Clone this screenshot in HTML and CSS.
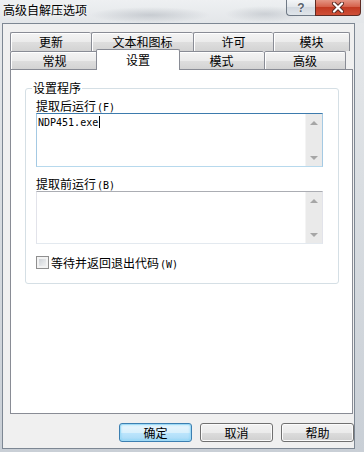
FILE: index.html
```html
<!DOCTYPE html>
<html>
<head>
    <title>高级自解压选项</title>
    <link rel="stylesheet" href="styles.css">
</head>
<body>
    <div class="window">
        <div class="titlebar">
            <span class="title">高级自解压选项</span>
            <div class="caption-buttons">
                <div class="cap-btn cap-help">?</div>
                <div class="cap-btn cap-close">
                    <svg width="14" height="11" viewBox="0 0 14 11">
                        <path d="M3 1.5 L11 9.5 M11 1.5 L3 9.5" stroke="#5a2a22" stroke-width="4" stroke-linecap="round"/>
                        <path d="M3 1.5 L11 9.5 M11 1.5 L3 9.5" stroke="#fff" stroke-width="2.2" stroke-linecap="round"/>
                    </svg>
                </div>
            </div>
        </div>

        <div class="client">
            <div class="tabs">
                <div class="tab-row back">
                    <div class="tab tab-update">更新</div>
                    <div class="tab tab-text">文本和图标</div>
                    <div class="tab tab-license">许可</div>
                    <div class="tab tab-modules">模块</div>
                </div>
                <div class="tab-row front">
                    <div class="tab tab-general">常规</div>
                    <div class="tab tab-setup active">设置</div>
                    <div class="tab tab-modes">模式</div>
                    <div class="tab tab-advanced">高级</div>
                </div>
            </div>

            <div class="panel">
                <fieldset class="group">
                    <legend>设置程序</legend>

                    <div class="field-label">提取后运行<span class="key">(F)</span></div>
                    <div class="textbox focused">
                        <div class="textbox-text">NDP451.exe<span class="caret"></span></div>
                        <div class="scrollbar">
                            <div class="scroll-btn"><span class="arrow-up"></span></div>
                            <div class="scroll-btn"><span class="arrow-down"></span></div>
                        </div>
                    </div>

                    <div class="field-label second">提取前运行<span class="key">(B)</span></div>
                    <div class="textbox short">
                        <div class="textbox-text"></div>
                        <div class="scrollbar">
                            <div class="scroll-btn"><span class="arrow-up"></span></div>
                            <div class="scroll-btn"><span class="arrow-down"></span></div>
                        </div>
                    </div>

                    <label class="check-row">
                        <span class="checkbox"></span>
                        <span>等待并返回退出代码<span class="key">(W)</span></span>
                    </label>
                </fieldset>
            </div>

            <div class="buttons">
                <button class="btn default">确定</button>
                <button class="btn">取消</button>
                <button class="btn">帮助</button>
            </div>
        </div>
    </div>
</body>
</html>
```

FILE: styles.css
```css
* {
    box-sizing: border-box;
}

body {
    margin: 0;
    font-family: "Noto Sans CJK SC", "Noto Sans", sans-serif;
    font-size: 12px;
    color: #000;
    background: #d7dce1;
}

.window {
    width: 364px;
    height: 452px;
    display: flex;
    flex-direction: column;
    overflow: hidden;
    background: linear-gradient(180deg, #e8eaec 0%, #dadee2 40%, #c9cfd6 100%);
}

/* title bar */

.titlebar {
    height: 23px;
    display: flex;
    align-items: flex-start;
    padding-left: 3px;
    background:
        radial-gradient(ellipse 60px 8px at 150px 15px, rgba(140, 148, 158, 0.35), transparent),
        radial-gradient(ellipse 40px 8px at 265px 14px, rgba(140, 148, 158, 0.3), transparent),
        linear-gradient(#eef0f2, #e3e6e9);
}

.title {
    line-height: 20px;
    text-shadow: 0 0 5px #fff;
}

.caption-buttons {
    display: flex;
    margin-left: auto;
    margin-right: 3px;
}

.cap-btn {
    height: 16px;
    display: flex;
    align-items: center;
    justify-content: center;
    border: 1px solid #6f7985;
    border-top: none;
}

.cap-help {
    width: 29px;
    border-right: none;
    border-radius: 0 0 0 4px;
    background: linear-gradient(#f4f6f8 0%, #e3e7eb 45%, #d3d9e0 50%, #e0e5ea 100%);
    font: bold 12px "Liberation Sans", sans-serif;
    color: #5a626c;
    text-shadow: 0 0 2px #fff;
}

.cap-close {
    width: 46px;
    border-color: #5e2b23;
    border-radius: 0 0 4px 0;
    background: linear-gradient(#e49584 0%, #d5624c 45%, #c23a22 50%, #cf4f37 100%);
}

/* client area */

.client {
    flex: 1;
    margin: 0 9px 3px 2px;
    border: 1px solid #7d8793;
    background: #f0f0f0;
    display: flex;
    flex-direction: column;
    padding: 8px 0 6px 7px;
}

/* tabs */

.tabs {
    display: flex;
    flex-direction: column;
}

.tab-row {
    display: flex;
    align-items: flex-start;
}

.tab-row.back {
    height: 19px;
}

.tab-row.front {
    height: 18px;
}

.tab {
    display: flex;
    align-items: center;
    justify-content: center;
    border: 1px solid #898c95;
    border-bottom: none;
    border-right: none;
    border-radius: 2px 2px 0 0;
    background: linear-gradient(#f4f4f4 0%, #ebebeb 50%, #dedede 52%, #d3d3d3 100%);
    box-shadow: inset 1px 1px 0 #fff;
    line-height: 14px;
}

.tab:last-child {
    border-right: 1px solid #898c95;
}

.tab-row.back .tab {
    height: 19px;
}

.tab-row.front .tab {
    height: 18px;
}

.tab-row.front .tab.active {
    position: relative;
    z-index: 1;
    height: 21px;
    margin: -2px -2px 0;
    padding-bottom: 1px;
    border-right: 1px solid #898c95;
    background: #fff;
    box-shadow: none;
}

.tab-update { width: 81px; }
.tab-text { width: 102px; }
.tab-license { width: 80px; }
.tab-modules { width: 77px; }
.tab-general { width: 88px; }
.tab-setup { width: 84px; }
.tab-modes { width: 86px; }
.tab-advanced { width: 82px; }

.panel {
    flex: 1;
    margin-right: 1px;
    border: 1px solid #898c95;
    background: #fff;
    padding: 11px 13px 0 14px;
}

/* group box */

.group {
    margin: 0;
    min-width: 0;
    padding: 4px 15px 14px 10px;
    border: 1px solid #d5dfe5;
    border-radius: 3px;
}

.group legend {
    margin-left: -4px;
    padding: 0 1px;
    line-height: 14px;
}

.field-label {
    line-height: 14px;
}

.field-label.second {
    margin-top: 10px;
}

.key {
    font: 10px "DejaVu Sans Mono", monospace;
    margin-left: 1px;
}

.textbox {
    display: flex;
    height: 54px;
    border: 1px solid;
    border-color: #abadb3 #e2e3ea #e3e9ef;
    background: #fff;
}

.textbox.focused {
    border-color: #3d7bad #a4c9e3 #b7d9ed;
}

.textbox.short {
    height: 53px;
}

.textbox-text {
    flex: 1;
    padding: 2px 1px;
    font: 10px/14px "DejaVu Sans Mono", monospace;
}

.caret {
    display: inline-block;
    width: 1px;
    height: 12px;
    margin-left: 1px;
    background: #000;
    vertical-align: -2px;
}

.scrollbar {
    width: 17px;
    display: flex;
    flex-direction: column;
    justify-content: space-between;
    background: #eaeaea;
    border-left: 1px solid #f4f4f4;
}

.scroll-btn {
    height: 17px;
    display: flex;
    align-items: center;
    justify-content: center;
}

.arrow-up,
.arrow-down {
    width: 0;
    height: 0;
    border-left: 4px solid transparent;
    border-right: 4px solid transparent;
}

.arrow-up {
    border-bottom: 4px solid #a6a6a6;
}

.arrow-down {
    border-top: 4px solid #a6a6a6;
}

.check-row {
    display: flex;
    align-items: center;
    gap: 2px;
    height: 14px;
    margin-top: 11px;
}

.checkbox {
    width: 13px;
    height: 13px;
    border: 1px solid #8f8f8f;
    background: linear-gradient(135deg, #c4c9cf 0%, #e6e8ea 60%, #f5f5f5 100%);
    box-shadow: inset 0 0 0 2px #f3f3f3;
}

/* dialog buttons */

.buttons {
    display: flex;
    justify-content: flex-end;
    gap: 8px;
    margin-top: 9px;
}

.btn {
    width: 73px;
    height: 19px;
    padding: 0;
    border: 1px solid #707070;
    border-radius: 3px;
    background: linear-gradient(#f2f2f2 0%, #ebebeb 50%, #dddddd 50%, #cfcfcf 100%);
    box-shadow: inset 0 0 0 1px #fbfbfb;
    font: inherit;
    line-height: 15px;
    color: #000;
}

.btn.default {
    border-color: #3c7fb1;
    background: linear-gradient(#eaf6fd 0%, #d9f0fc 50%, #bee6fd 50%, #a7d9f5 100%);
    box-shadow: inset 0 0 0 1px #9fdaf6, inset 0 0 3px #5cc8f4;
}
```
